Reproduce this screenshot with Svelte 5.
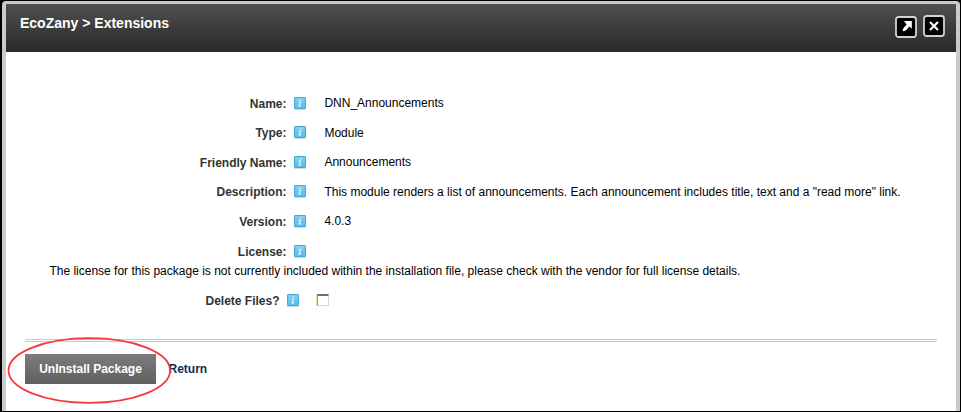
<script>
  const rows = [
    { label: 'Name:', value: 'DNN_Announcements', h: 29 },
    { label: 'Type:', value: 'Module', h: 30 },
    { label: 'Friendly Name:', value: 'Announcements', h: 29 },
    { label: 'Description:', value: 'This module renders a list of announcements. Each announcement includes title, text and a "read more" link.', h: 30 },
    { label: 'Version:', value: '4.0.3', h: 30 },
    { label: 'License:', value: '', h: 20 }
  ];
</script>

{#snippet info()}
  <svg class="info" width="14" height="15" viewBox="0 0 14 15">
    <defs>
      <linearGradient id="blue" x1="0" y1="0" x2="0" y2="1">
        <stop offset="0" stop-color="#86d0ee" />
        <stop offset="1" stop-color="#50bdf0" />
      </linearGradient>
    </defs>
    <path d="M1 13.5h12" stroke="#d5dadd" />
    <rect x="1.5" y="1.5" width="11" height="11" rx=".6" fill="url(#blue)" stroke="#46a6d6" />
    <path d="M7.9 3.4l-.3 1.3M5.6 6h1.8l-.9 4h1.6M5.2 10h1.2" fill="none" stroke="#f3fbff" stroke-width="1.1" />
  </svg>
{/snippet}

<div class="window">
  <div class="panel">
    <header>
      <h1>EcoZany &gt; Extensions</h1>
      <div class="tools">
        <svg class="expand" width="22" height="22" viewBox="0 0 22 22">
          <rect x="1" y="1" width="20" height="20" rx="2.5" fill="#000" stroke="#d2d2d2" stroke-width="1.8" />
          <path d="M9 5h7.8v7.8l-2.4-2.2-3.3 3.6-2.6 1-1-1 .9-2 3.2-3.6z" fill="#fff" />
        </svg>
        <svg width="22" height="22" viewBox="0 0 22 22">
          <rect x="1" y="1" width="20" height="20" rx="2.5" fill="#000" stroke="#d2d2d2" stroke-width="1.8" />
          <path d="M7 7l8 8M15 7l-8 8" stroke="#fff" stroke-width="2.2" />
        </svg>
      </div>
    </header>
    <main>
      {#each rows as row}
        <div class="row" style:height="{row.h}px">
          <span class="label">{row.label}</span>
          {@render info()}
          <span class="value" class:low={row.h === 30 && row.label !== 'Version:'}>{row.value}</span>
        </div>
      {/each}
      <p>The license for this package is not currently included within the installation file, please check with the vendor for full license details.</p>
      <div class="row delete">
        <span class="label">Delete Files?</span>
        {@render info()}
        <span class="check"></span>
      </div>
      <div class="rule"></div>
      <div class="actions">
        <button>UnInstall Package</button>
        <a href="#return">Return</a>
        <svg class="ring" width="166" height="70" viewBox="0 0 166 70">
          <ellipse cx="82.3" cy="34.5" rx="80.8" ry="32.3" fill="none" stroke="#f5383b" stroke-width="1.8" />
        </svg>
      </div>
    </main>
  </div>
</div>

<style>
  :global(body) { background: #000; }
  .window {
    box-sizing: border-box;
    width: 961px;
    height: 412px;
    padding: 1px;
    background: #000;
    font: 12px/16px "Liberation Sans", Arial, sans-serif;
    color: #000;
  }
  .panel {
    box-sizing: border-box;
    height: 410px;
    border: solid #cbc9ca;
    border-width: 3px 4px 0 4px;
    margin-left: 1px;
    border-radius: 4px 4px 0 0;
    background: #fff;
    overflow: hidden;
  }
  header {
    display: flex;
    justify-content: space-between;
    box-sizing: border-box;
    height: 48px;
    padding: 11px 11px 0 14px;
    background: linear-gradient(#505050, #282828);
  }
  h1 {
    margin: 0;
    font-size: 14px;
    line-height: 16px;
    color: #fff;
  }
  .tools { display: flex; gap: 6px; }
  .tools svg { display: block; }
  .tools .expand { margin-top: 1px; }
  main { padding-top: 43px; }
  .row { display: flex; align-items: flex-start; }
  .label {
    width: 280.5px;
    margin-top: 1px;
    text-align: right;
    font-weight: bold;
    color: #333;
    flex: none;
  }
  .info { margin: 1px 0 0 6.5px; flex: none; }
  .value { margin-left: 17.4px; white-space: nowrap; }
  .low { margin-top: 1px; }
  p { margin: 0 0 0 43.4px; height: 29px; white-space: nowrap; }
  .delete { height: 47px; }
  .delete .label { width: 273.5px; }
  .check {
    box-sizing: border-box;
    width: 12px;
    height: 12px;
    margin: 2px 0 0 17px;
    border: 1px solid #d8d4d8;
    border-top: 2px solid #716f75;
    border-left: 1px solid #8b96bd;
    box-shadow: -1px 0 #efdfae;
  }
  .rule {
    height: 1px;
    margin: 0 19px;
    border: solid #cacaca;
    border-width: 1px 0;
  }
  .actions {
    position: relative;
    display: flex;
    align-items: center;
    height: 30px;
    margin: 12px 0 0 19px;
  }
  button {
    width: 131px;
    height: 30px;
    border: 0;
    padding: 0;
    background: linear-gradient(#7d7d7d, #5f5f5f);
    color: #fff;
    font: bold 12px "Liberation Sans", Arial, sans-serif;
  }
  a {
    margin-left: 12.5px;
    color: #0b2e5b;
    font-weight: bold;
    text-decoration: none;
  }
  .ring { position: absolute; left: -18px; top: -18px; }
</style>
